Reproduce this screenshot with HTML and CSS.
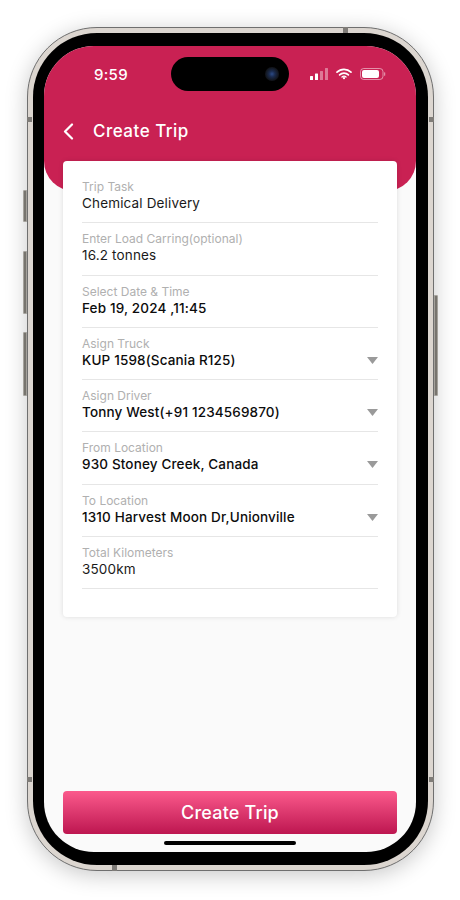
FILE: index.html
```html
<!DOCTYPE html>
<html lang="en">
<head>
<meta charset="utf-8">
<title>Create Trip</title>
<link rel="stylesheet" href="styles.css">
</head>
<body>
<div class="phone">
  <span class="side side-l1"></span>
  <span class="side side-l2"></span>
  <span class="side side-l3"></span>
  <span class="side side-r1"></span>
  <span class="band band-a"></span>
  <span class="band band-b"></span>
  <span class="band band-c"></span>
  <span class="band band-d"></span>
  <span class="band band-e hband"></span>
  <span class="band band-f hband"></span>
  <div class="bezel">
    <div class="screen">
      <div class="island"><span class="camera"></span></div>
      <header class="header">
        <div class="status">
          <span class="time">9:59</span>
          <div class="status-icons">
            <svg width="18" height="12" viewBox="0 0 18 12"><rect x="0" y="8" width="3" height="4" rx=".5" fill="#fff"/><rect x="5" y="5.5" width="3" height="6.5" rx=".5" fill="#fff"/><rect x="10" y="3" width="3" height="9" rx=".5" fill="#fff" fill-opacity=".4"/><rect x="15" y="0" width="3" height="12" rx=".5" fill="#fff" fill-opacity=".4"/></svg>
            <svg width="16" height="12" viewBox="0 0 16 12" fill="none" stroke="#fff" stroke-width="1.7" stroke-linecap="round"><path d="M1 4.2a10 10 0 0 1 14 0"/><path d="M3.6 6.9a6.3 6.3 0 0 1 8.8 0"/><circle cx="8" cy="10.2" r="1.1" fill="#fff" stroke="none"/><path d="M6 9a3 3 0 0 1 4 0" stroke-width="1.4"/></svg>
            <svg width="26" height="12" viewBox="0 0 26 12"><rect x=".5" y=".5" width="22.5" height="11" rx="3.2" fill="none" stroke="#fff" stroke-opacity=".5"/><rect x="2" y="2" width="17" height="8" rx="2" fill="#fff"/><rect x="24.2" y="4.2" width="1" height="3.6" rx=".5" fill="#fff" fill-opacity=".6"/></svg>
          </div>
        </div>
        <div class="titlebar">
          <svg class="back" width="11" height="17" viewBox="0 0 11 17" fill="none" stroke="#fff" stroke-width="2.2" stroke-linecap="round" stroke-linejoin="round"><path d="M9 1.5 2 8.5l7 7"/></svg>
          <h1 class="title">Create Trip</h1>
        </div>
      </header>
      <main class="content">
        <section class="card">
          <div class="row"><div class="label">Trip Task</div><div class="value">Chemical Delivery</div></div>
          <div class="row"><div class="label">Enter Load Carring(optional)</div><div class="value">16.2 tonnes</div></div>
          <div class="row"><div class="label">Select Date &amp; Time</div><div class="value strong">Feb 19, 2024 ,11:45</div></div>
          <div class="row"><div class="label">Asign Truck</div><div class="select"><div class="value strong">KUP 1598(Scania R125)</div><svg class="caret" width="11" height="7" viewBox="0 0 11 7"><path d="M0 0h11L5.5 7z"/></svg></div></div>
          <div class="row"><div class="label">Asign Driver</div><div class="select"><div class="value strong">Tonny West(+91 1234569870)</div><svg class="caret" width="11" height="7" viewBox="0 0 11 7"><path d="M0 0h11L5.5 7z"/></svg></div></div>
          <div class="row"><div class="label">From Location</div><div class="select"><div class="value strong">930 Stoney Creek, Canada</div><svg class="caret" width="11" height="7" viewBox="0 0 11 7"><path d="M0 0h11L5.5 7z"/></svg></div></div>
          <div class="row"><div class="label">To Location</div><div class="select"><div class="value strong">1310 Harvest Moon Dr,Unionville</div><svg class="caret" width="11" height="7" viewBox="0 0 11 7"><path d="M0 0h11L5.5 7z"/></svg></div></div>
          <div class="row"><div class="label">Total Kilometers</div><div class="value">3500km</div></div>
        </section>
        <button class="cta" type="button">Create Trip</button>
        <div class="home"></div>
      </main>
    </div>
  </div>
</div>
</body>
</html>
```
FILE: styles.css
```css
* { box-sizing: border-box; }
html, body { margin: 0; padding: 0; height: 900px; background: #fff; overflow: hidden; }
body { font-family: Inter, "Liberation Sans", sans-serif; padding: 27px 0 0 27px; }

.phone {
  position: relative;
  width: 407px;
  height: 844px;
  border-radius: 70px;
  background: #dcd6d0;
  border: 1px solid #6f6f6f;
  padding: 5px;
  box-shadow: 0 4px 22px rgba(0, 0, 0, .22);
}
.side { position: absolute; width: 4px; background: #77746e; border: 1px solid #a5a29c; border-radius: 1px 0 0 1px; }
.side-l1 { left: -5px; top: 162px; height: 32px; }
.side-l2 { left: -5px; top: 223px; height: 63px; }
.side-l3 { left: -5px; top: 304px; height: 64px; }
.side-r1 { right: -5px; top: 267px; height: 101px; border-radius: 0 1px 1px 0; }
.band { position: absolute; width: 5px; height: 5px; background: #7f7c78; }
.hband { width: 5px; height: 6px; }
.band-a { left: -1px; top: 89px; }
.band-b { right: -1px; top: 89px; }
.band-c { left: -1px; top: 749px; }
.band-d { right: -1px; top: 749px; }
.band-e { left: 84px; bottom: -1px; }
.band-f { left: 315px; top: -1px; }

.bezel {
  height: 100%;
  background: #000;
  border-radius: 64px;
  padding: 13px 12px 13px 11px;
}
.screen {
  position: relative;
  height: 100%;
  display: flex;
  flex-direction: column;
  border-radius: 50px;
  background: #fafafa;
  overflow: hidden;
}
.island {
  position: absolute;
  top: 11px;
  left: 127px;
  width: 118px;
  height: 34px;
  border-radius: 17px;
  background: #000;
  display: flex;
  justify-content: flex-end;
  align-items: center;
  padding-right: 10px;
}
.camera {
  width: 14px;
  height: 14px;
  border-radius: 50%;
  background: radial-gradient(circle, #2c4a86 0, #1a2a4c 30%, #12151c 65%);
}

.header {
  flex: none;
  height: 145px;
  background: #c92153;
  border-radius: 0 0 30px 30px;
  color: #fff;
  display: flex;
  flex-direction: column;
}
.status {
  height: 56px;
  padding: 0 30px 0 50px;
  display: flex;
  align-items: center;
  justify-content: space-between;
}
.time { font-size: 15px; font-weight: 500; letter-spacing: .3px; }
.status-icons { display: flex; align-items: center; gap: 8px; margin-top: -1px; }
.status-icons svg { display: block; }
.titlebar {
  display: flex;
  align-items: center;
  height: 58px;
  padding-left: 19px;
}
.back { flex: none; margin-right: 19px; }
.title { margin: 0; font-size: 17px; font-weight: 500; letter-spacing: .5px; }

.content {
  flex: 1;
  display: flex;
  flex-direction: column;
  padding: 0 19px 7px;
  margin-top: -30px;
  position: relative;
}
.card {
  background: #fff;
  border-radius: 4px;
  box-shadow: 0 0 5px rgba(0, 0, 0, .12);
  padding: 10px 19px 27.6px;
}
.row {
  height: 52.3px;
  padding-top: 8px;
  border-bottom: 1px solid #e6e6e6;
}
.label { font-size: 12px; line-height: 15px; color: #b0b0b0; }
.value { font-size: 13.5px; line-height: 18px; color: #1a1a1a; letter-spacing: .15px; }
.strong { font-weight: 500; color: #0c0c0c; }
.select { display: flex; align-items: center; justify-content: space-between; }
.caret { display: block; fill: #9a9a9a; margin-top: 1px; }

.cta {
  margin-top: auto;
  height: 43px;
  border: 0;
  border-radius: 4px;
  background: linear-gradient(180deg, #fb5a8c 0%, #bd1650 100%);
  color: #fff;
  font-family: inherit;
  font-size: 18px;
  font-weight: 500;
  letter-spacing: .2px;
}
.home {
  width: 132px;
  height: 4px;
  border-radius: 2px;
  background: #000;
  margin: 7px auto 0;
}
```
